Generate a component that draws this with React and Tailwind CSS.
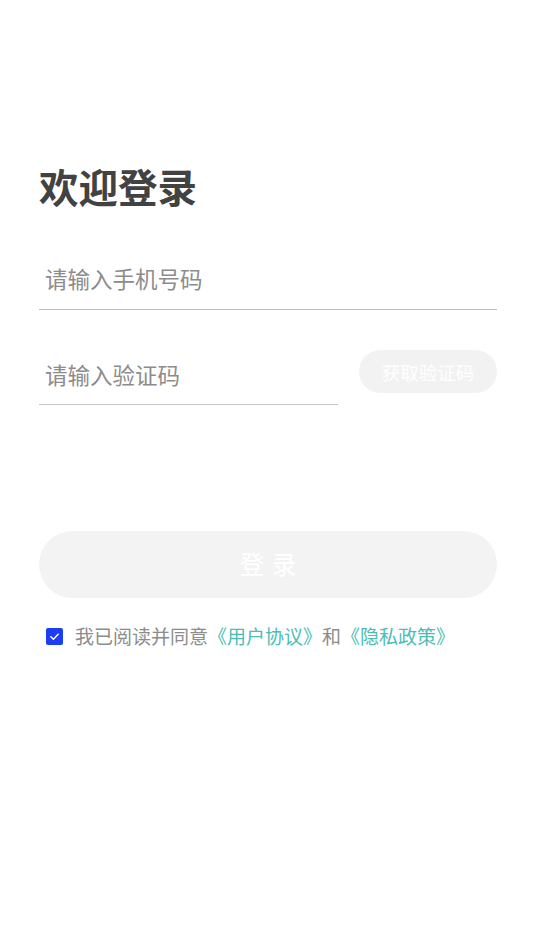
import React from "react";

function Open() {
  return (
    <span style={{ fontFamily: '"Noto Sans CJK JP", sans-serif' }}>《</span>
  );
}
function Close() {
  return (
    <span style={{ fontFamily: '"Noto Sans CJK JP", sans-serif' }}>》</span>
  );
}

export default function App() {
  return (
    <div
      className="w-[535px] h-[951px] bg-white"
      style={{ fontFamily: '"Noto Sans CJK SC", "Noto Sans", sans-serif' }}
    >
      <div className="pt-[161px] pl-[39px] w-[497px]">
        <h1 className="text-[39.5px] leading-[50px] font-bold text-[#424242]">欢迎登录</h1>

        <div className="mt-[47px] h-[52px] pb-[12px] border-b border-[#bdbdbd] flex items-center">
          <input
            className="w-full pl-[6px] text-[22.5px] leading-[30px] outline-none bg-transparent text-[#333] placeholder:text-[#8c8c8c]"
            placeholder="请输入手机号码"
          />
        </div>

        <div className="mt-[43px] flex items-start gap-[21px]">
          <div className="w-[299px] h-[52px] pb-[10px] border-b border-[#c4c4c4] flex items-center">
            <input
              className="w-full pl-[6px] text-[22.5px] leading-[30px] outline-none bg-transparent text-[#333] placeholder:text-[#8c8c8c]"
              placeholder="请输入验证码"
            />
          </div>
          <button className="-mt-[3px] w-[138px] h-[43px] rounded-full bg-[#f2f2f2] text-white text-[18.5px] leading-[26px] flex items-center justify-center">
            获取验证码
          </button>
        </div>

        <button className="mt-[126px] w-[458px] h-[67px] rounded-full bg-[#f3f3f3] text-white text-[25px] leading-[30px] tracking-[7px] flex items-center justify-center pl-[7px] pb-[3px]">
          登录
        </button>

        <div className="mt-[26px] flex items-center pl-[7px]">
          <div className="w-[17px] h-[17px] rounded-[2px] bg-[#1a3df5] flex items-center justify-center">
            <svg width="11" height="11" viewBox="0 0 12 12" fill="none">
              <path d="M2 6.3L4.8 9 10 3.5" stroke="white" strokeWidth="1.6" strokeLinecap="round" strokeLinejoin="round" />
            </svg>
          </div>
          <p className="ml-[12px] text-[19px] leading-[24px] text-[#8c8c8c] whitespace-nowrap">
            我已阅读并同意
            <span className="text-[#4bbdb4]">
              <Open />用户协议<Close />
            </span>
            和
            <span className="text-[#4bbdb4]">
              <Open />隐私政策<Close />
            </span>
          </p>
        </div>
      </div>
    </div>
  );
}
